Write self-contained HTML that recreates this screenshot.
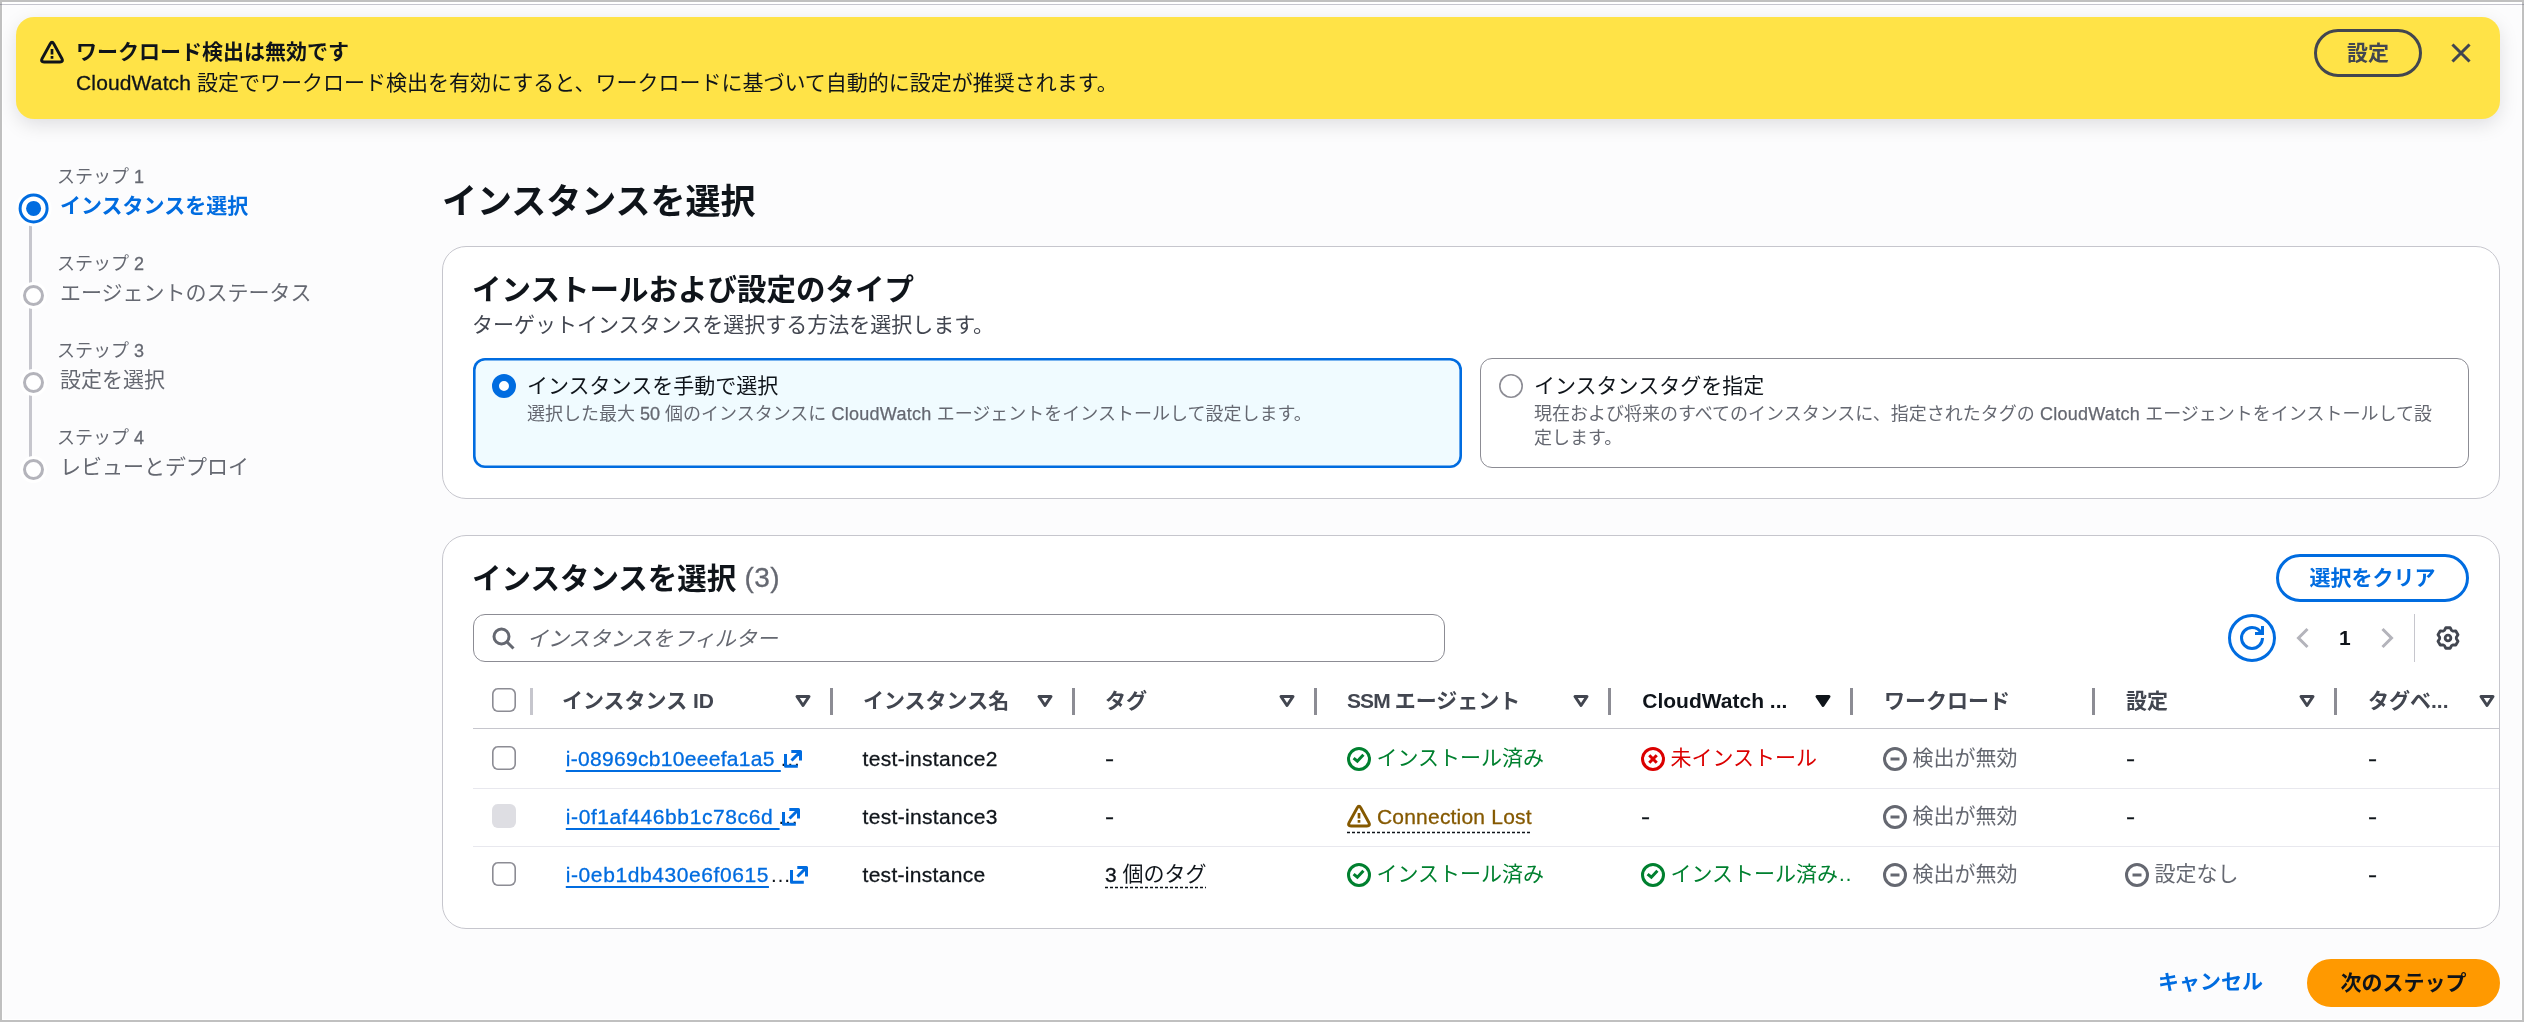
<!DOCTYPE html>
<html lang="ja">
<head>
<meta charset="utf-8">
<title>インスタンスを選択</title>
<style>
*{box-sizing:border-box;margin:0;padding:0}
html,body{width:2524px;height:1022px;overflow:hidden;background:#fcfcfd}
body{position:relative;font-family:"Liberation Sans","Noto Sans CJK JP",sans-serif;font-size:21px;line-height:30px;color:#0f141a;-webkit-font-smoothing:antialiased}
.abs{position:absolute;white-space:nowrap}
.b{font-weight:700}
svg{display:block;position:absolute;overflow:visible}
svg.ic{width:24px;height:24px;fill:none;stroke:currentColor;stroke-width:2;stroke-linecap:butt;stroke-linejoin:miter}
svg.ic.rj,svg.ic .rj{stroke-linejoin:round}
svg.ic.rc,svg.ic .rc{stroke-linecap:round}
.l{letter-spacing:.15px;-webkit-text-stroke:.3px currentColor}
.l2{letter-spacing:.25px;-webkit-text-stroke:.25px currentColor}
.lt{-webkit-text-stroke:.3px currentColor}
#wrap{position:absolute;left:0;top:0;width:2524px;height:1022px;will-change:transform}
/* frame */
#frame{position:absolute;left:0;top:0;width:2524px;height:1022px;border:2px solid #c0c0c0;z-index:50;pointer-events:none}
#frame i{position:absolute;left:0;top:0;right:0;bottom:0;border:2px solid #fff;border-width:2px 1px 1px 1px}
#topline{position:absolute;left:0;top:4px;width:2524px;height:1px;background:rgba(80,80,110,.32);z-index:60}
/* flash */
#flash{position:absolute;left:16px;top:17px;width:2484px;height:102px;border-radius:18px;background:#ffe347;box-shadow:0 6px 20px -1px rgba(0,7,22,.13)}
.btn{position:absolute;height:48px;border-radius:24px;border:3px solid;font-weight:700;text-align:center;line-height:42px;white-space:nowrap}
/* steps */
.sm{font-size:18px;line-height:24px;color:#656871}
.mut{color:#656871}
.sec{color:#424650}
.blue{color:#006ce0}
.vline{position:absolute;left:29px;width:3px;background:#c6c6cd}
.dot{position:absolute;border-radius:50%;box-shadow:0 0 0 3px #fff}
/* containers */
.box{position:absolute;left:442px;width:2058px;border:1px solid #c6c6cd;border-radius:24px;background:#fff;overflow:hidden}
.tile{position:absolute;top:358px;width:989px;height:110px;border-radius:12px}
/* table */
.hd{font-weight:700;color:#424650}
.div{position:absolute;top:688px;width:3px;height:27px;background:#8c8c94}
.cb{position:absolute;left:492px;width:24px;height:24px;box-shadow:inset 0 0 0 1.6px #8c8c94;border-radius:6px;background:#fff}
.rowline{position:absolute;left:473px;width:2026px;height:1px;background:#e8e8ee}
.st{position:absolute;white-space:nowrap;padding-left:29.5px}
.st svg{left:0;top:3px}
.green{color:#00802f}.red{color:#db0000}.warn{color:#855900}
.dash{border-bottom:1.5px dashed currentColor}
a.lnk{color:#006ce0;white-space:pre;text-decoration:underline;text-decoration-thickness:1.5px;text-underline-offset:4.2px}
</style>
</head>
<body>
<div id="wrap">
<div id="topline"></div>

<!-- FLASH -->
<div id="flash"></div>
<svg class="ic rj" style="left:40px;top:40px" viewBox="0 0 16 16"><path d="M6.8 2.59Q8 .4 9.2 2.59L14.6 12.41Q15.8 14.6 13.3 14.6H2.7Q.2 14.6 1.4 12.41Z"/><path d="M8 6v3.7M8 10.7v1.8" stroke-width="1.8"/></svg>
<div class="abs b" style="left:76px;top:37px">ワークロード検出は無効です</div>
<div class="abs" style="left:76px;top:68px"><span class="l">CloudWatch </span>設定でワークロード検出を有効にすると、ワークロードに基づいて自動的に設定が推奨されます。</div>
<div class="btn sec" style="left:2314px;top:29px;width:108px;border-color:#424650">設定</div>
<svg class="ic sec" style="left:2449px;top:41px" viewBox="0 0 16 16"><path d="m2.3 2.3 11.4 11.4M13.7 2.3 2.3 13.7"/></svg>

<!-- STEPS -->
<div class="vline" style="top:222px;height:66px"></div>
<div class="vline" style="top:305px;height:70px"></div>
<div class="vline" style="top:392px;height:70px"></div>
<div class="abs sm" style="left:57px;top:165px">ステップ <span class="lt">1</span></div>
<div class="abs b blue" style="left:60px;top:191px">インスタンスを選択</div>
<svg style="left:13px;top:188px;width:41px;height:41px" viewBox="0 0 41 41"><circle cx="20.6" cy="20.4" r="18" fill="#fff"/><circle cx="20.6" cy="20.4" r="13.5" fill="#fff" stroke="#006ce0" stroke-width="3"/><circle cx="20.6" cy="20.4" r="7.5" fill="#006ce0"/></svg>

<div class="abs sm" style="left:57px;top:252px">ステップ <span class="lt">2</span></div>
<div class="abs mut" style="left:60px;top:278px">エージェントのステータス</div>
<div class="dot" style="left:23px;top:285px;width:21px;height:21px;border:3px solid #b4b4bb;background:#fff"></div>

<div class="abs sm" style="left:57px;top:339px">ステップ <span class="lt">3</span></div>
<div class="abs mut" style="left:60px;top:365px">設定を選択</div>
<div class="dot" style="left:23px;top:372px;width:21px;height:21px;border:3px solid #b4b4bb;background:#fff"></div>

<div class="abs sm" style="left:57px;top:426px">ステップ <span class="lt">4</span></div>
<div class="abs mut" style="left:60px;top:452px">レビューとデプロイ</div>
<div class="dot" style="left:23px;top:459px;width:21px;height:21px;border:3px solid #b4b4bb;background:#fff"></div>

<!-- MAIN -->
<h1 class="abs b" style="left:442px;top:179px;font-size:35px;line-height:45px">インスタンスを選択</h1>

<div class="box" style="top:246px;height:253px"></div>
<h2 class="abs b" style="left:472px;top:271.5px;font-size:29.5px;line-height:36px">インストールおよび設定のタイプ</h2>
<div class="abs sec" style="left:472px;top:310px">ターゲットインスタンスを選択する方法を選択します。</div>

<div class="tile" style="left:473px;box-shadow:inset 0 0 0 2.6px #006ce0;background:#f0fbff"></div>
<div class="dot" style="left:492px;top:374px;width:24px;height:24px;border:7px solid #006ce0;background:#fff;box-shadow:none"></div>
<div class="abs" style="left:527px;top:370.5px">インスタンスを手動で選択</div>
<div class="abs sm" style="left:527px;top:402px">選択した最大 <span class="lt">50</span> 個のインスタンスに<span class="l2"> CloudWatch </span>エージェントをインストールして設定します。</div>

<div class="tile" style="left:1480px;border:1.5px solid #8c8c94;background:#fff"></div>
<div class="dot" style="left:1499px;top:374px;width:24px;height:24px;background:#fff;box-shadow:inset 0 0 0 1.6px #8c8c94"></div>
<div class="abs" style="left:1534px;top:370.5px">インスタンスタグを指定</div>
<div class="abs sm" style="left:1534px;top:402px;white-space:normal;width:910px">現在および将来のすべてのインスタンスに、指定されたタグの<span class="l2"> CloudWatch </span>エージェントをインストールして設定します。</div>

<div class="box" style="top:535px;height:394px"></div>
<h2 class="abs b" style="left:472px;top:560.5px;font-size:29.5px;line-height:36px">インスタンスを選択 <span class="mut lt" style="font-weight:400;font-size:28px;position:relative;top:-1.5px;letter-spacing:.4px">(3)</span></h2>
<div class="btn blue" style="left:2276px;top:554px;width:193px;border-color:#006ce0">選択をクリア</div>

<div class="abs" style="left:473px;top:614px;width:972px;height:48px;border:1.5px solid #8c8c94;border-radius:12px;background:#fff"></div>
<svg class="ic mut" style="left:491px;top:626px" viewBox="0 0 16 16"><circle cx="7" cy="7" r="5"/><path d="m15 15-4.5-4.5"/></svg>
<div class="abs mut" style="left:527px;top:623.5px;font-style:italic">インスタンスをフィルター</div>

<div class="abs" style="left:2228px;top:614px;width:48px;height:48px;border:3px solid #006ce0;border-radius:50%"></div>
<svg class="ic blue" style="left:2240px;top:626px" viewBox="0 0 16 16"><path d="M15 8c0 3.87-3.13 7-7 7s-7-3.13-7-7 3.13-7 7-7c2.79 0 5.2 1.63 6.33 4"/><path d="M10 5h5V0"/></svg>
<svg class="ic" style="left:2291px;top:626px;color:#b4b4bb" viewBox="0 0 16 16"><path d="M11 2 5 8l6 6"/></svg>
<div class="abs b" style="left:2339px;top:623px">1</div>
<svg class="ic" style="left:2375px;top:626px;color:#b4b4bb" viewBox="0 0 16 16"><path d="m5 2 6 6-6 6"/></svg>
<div class="abs" style="left:2414px;top:614px;width:1px;height:48px;background:#c6c6cd"></div>
<svg class="ic sec rj" style="left:2436px;top:626px;stroke-width:1.9" viewBox="0 0 16 16"><circle cx="8" cy="8" r="1.9"/><path d="M9.46 1.15H6.54L5.63 2.92 4.79 3.41 2.8 3.32 1.34 5.84 2.42 7.51V8.49L1.34 10.16 2.8 12.68 4.79 12.59 5.63 13.08 6.54 14.85H9.46L10.37 13.08 11.21 12.59 13.2 12.68 14.66 10.16 13.58 8.49V7.51L14.66 5.84 13.2 3.32 11.21 3.41 10.37 2.92Z"/></svg>

<!-- TABLE HEADER -->
<div class="cb" style="top:688px"></div>
<div class="div" style="left:530px;background:#c6c6cd"></div>
<div class="abs hd" style="left:562px;top:686px">インスタンス ID</div>
<div class="div" style="left:830px"></div>
<div class="abs hd" style="left:863px;top:686px">インスタンス名</div>
<div class="div" style="left:1072px"></div>
<div class="abs hd" style="left:1105px;top:686px">タグ</div>
<div class="div" style="left:1314px"></div>
<div class="abs hd" style="left:1347px;top:686px"><span style="letter-spacing:-.9px">SSM </span>エージェント</div>
<div class="div" style="left:1608px"></div>
<div class="abs hd" style="left:1642.3px;top:686px;color:#0f141a">CloudWatch ...</div>
<div class="div" style="left:1850px"></div>
<div class="abs hd" style="left:1884px;top:686px">ワークロード</div>
<div class="div" style="left:2092px"></div>
<div class="abs hd" style="left:2126px;top:686px">設定</div>
<div class="div" style="left:2334px"></div>
<div class="abs hd" style="left:2368px;top:686px">タグベ...</div>
<div class="abs" style="left:473px;top:728px;width:2026px;height:1px;background:#c6c6cd"></div>

<svg class="ic rj sec" style="left:791.2px;top:689px" viewBox="0 0 16 16"><path d="M4 5h8l-4 6-4-6z"/></svg>
<svg class="ic rj sec" style="left:1033.2px;top:689px" viewBox="0 0 16 16"><path d="M4 5h8l-4 6-4-6z"/></svg>
<svg class="ic rj sec" style="left:1274.7px;top:689px" viewBox="0 0 16 16"><path d="M4 5h8l-4 6-4-6z"/></svg>
<svg class="ic rj sec" style="left:1568.7px;top:689px" viewBox="0 0 16 16"><path d="M4 5h8l-4 6-4-6z"/></svg>
<svg class="ic rj" style="left:1810.7px;top:689px;fill:currentColor" viewBox="0 0 16 16"><path d="M4 5h8l-4 6-4-6z"/></svg>
<svg class="ic rj sec" style="left:2294.7px;top:689px" viewBox="0 0 16 16"><path d="M4 5h8l-4 6-4-6z"/></svg>
<svg class="ic rj sec" style="left:2474.7px;top:689px" viewBox="0 0 16 16"><path d="M4 5h8l-4 6-4-6z"/></svg>
<!-- ROWS -->
<div class="cb" style="top:746px"></div>
<div class="abs" style="left:565.8px;top:744px;"><a class="lnk lt" style="letter-spacing:.30px">i-08969cb10eeefa1a5 </a></div>
<div class="abs" style="left:779.8px;top:744px;z-index:0">…</div>
<svg class="ic rj blue" style="left:782px;top:748px;stroke-width:3" viewBox="0 0 24 24"><path d="M3.5 6.1V18.3H15.8M9.3 3.5H18.5V12.5M18.5 3.5 9.5 12.5"/></svg>
<div class="abs" style="left:862.5px;top:744px;letter-spacing:.33px;-webkit-text-stroke:.3px currentColor">test-instance2</div>
<div class="abs" style="left:1105px;top:744px;"><span class="lt" style="display:inline-block;transform:scaleX(1.3);transform-origin:0 0">-</span></div>
<div class="st green" style="left:1347px;top:744px;"><svg class="ic" viewBox="0 0 16 16"><circle cx="8" cy="8" r="7"/><path d="m4.4 7.4 2.5 2.1 4.05-4.4"/></svg><span style="position:relative;top:-1px">インストール済み</span></div>
<div class="st red" style="left:1641px;top:744px;"><svg class="ic" viewBox="0 0 16 16"><circle cx="8" cy="8" r="7"/><path d="m10.5 5.5-5 5M5.5 5.5l5 5"/></svg><span style="position:relative;top:-1px">未インストール</span></div>
<div class="st mut" style="left:1883px;top:744px;"><svg class="ic" viewBox="0 0 16 16"><circle cx="8" cy="8" r="7"/><path d="M11 8H5"/></svg><span style="position:relative;top:-1px">検出が無効</span></div>
<div class="abs" style="left:2126px;top:744px;"><span class="lt" style="display:inline-block;transform:scaleX(1.3);transform-origin:0 0">-</span></div>
<div class="abs" style="left:2368px;top:744px;"><span class="lt" style="display:inline-block;transform:scaleX(1.3);transform-origin:0 0">-</span></div>
<div class="cb" style="top:804px;box-shadow:none;background:#dedee3"></div>
<div class="abs" style="left:565.8px;top:802px;"><a class="lnk lt" style="letter-spacing:.59px">i-0f1af446bb1c78c6d </a></div>
<div class="abs" style="left:777.6px;top:802px;">…</div>
<svg class="ic rj blue" style="left:779.8px;top:806px;stroke-width:3" viewBox="0 0 24 24"><path d="M3.5 6.1V18.3H15.8M9.3 3.5H18.5V12.5M18.5 3.5 9.5 12.5"/></svg>
<div class="abs" style="left:862.5px;top:802px;letter-spacing:.33px;-webkit-text-stroke:.3px currentColor">test-instance3</div>
<div class="abs" style="left:1105px;top:802px;"><span class="lt" style="display:inline-block;transform:scaleX(1.3);transform-origin:0 0">-</span></div>
<div class="st warn" style="left:1347px;top:802px;padding-left:30px"><svg style="top:1.75px" class="ic rj" viewBox="0 0 16 16"><path d="M6.8 2.59Q8 .4 9.2 2.59L14.6 12.41Q15.8 14.6 13.3 14.6H2.7Q.2 14.6 1.4 12.41Z"/><path d="M8 6v3.7M8 10.7v1.8" stroke-width="1.8"/></svg><span class="lt" style="letter-spacing:.2px">Connection Lost</span></div>
<svg style="left:1347px;top:831px;width:185px;height:3px" viewBox="0 0 185 3"><line x1="0" y1="1.5" x2="185" y2="1.5" stroke="#0f141a" stroke-width="1.3" stroke-dasharray="3 2"/></svg>
<div class="abs" style="left:1641px;top:802px;"><span class="lt" style="display:inline-block;transform:scaleX(1.3);transform-origin:0 0">-</span></div>
<div class="st mut" style="left:1883px;top:802px;"><svg class="ic" viewBox="0 0 16 16"><circle cx="8" cy="8" r="7"/><path d="M11 8H5"/></svg><span style="position:relative;top:-1px">検出が無効</span></div>
<div class="abs" style="left:2126px;top:802px;"><span class="lt" style="display:inline-block;transform:scaleX(1.3);transform-origin:0 0">-</span></div>
<div class="abs" style="left:2368px;top:802px;"><span class="lt" style="display:inline-block;transform:scaleX(1.3);transform-origin:0 0">-</span></div>
<div class="cb" style="top:862px"></div>
<div class="abs" style="left:565.8px;top:860px;"><a class="lnk lt" style="letter-spacing:.58px">i-0eb1db430e6f0615</a><span style="letter-spacing:.5px;margin-left:1px">…</span></div>
<svg class="ic rj blue" style="left:788px;top:864px;stroke-width:3" viewBox="0 0 24 24"><path d="M3.5 6.1V18.3H15.8M9.3 3.5H18.5V12.5M18.5 3.5 9.5 12.5"/></svg>
<div class="abs" style="left:862.5px;top:860px;letter-spacing:.30px;-webkit-text-stroke:.3px currentColor">test-instance</div>
<div class="abs" style="left:1105px;top:860px;"><span class="lt">3</span> <span style="position:relative;top:-1px">個のタグ</span></div>
<svg style="left:1105px;top:886.2px;width:101px;height:3px" viewBox="0 0 101 3"><line x1="0" y1="1.5" x2="101" y2="1.5" stroke="#0f141a" stroke-width="1.3" stroke-dasharray="3 2"/></svg>
<div class="st green" style="left:1347px;top:860px;"><svg class="ic" viewBox="0 0 16 16"><circle cx="8" cy="8" r="7"/><path d="m4.4 7.4 2.5 2.1 4.05-4.4"/></svg><span style="position:relative;top:-1px">インストール済み</span></div>
<div class="st green" style="left:1641px;top:860px;width:210px;overflow:hidden"><svg class="ic" viewBox="0 0 16 16"><circle cx="8" cy="8" r="7"/><path d="m4.4 7.4 2.5 2.1 4.05-4.4"/></svg><span style="position:relative;top:-1px">インストール済み…</span></div>
<div class="st mut" style="left:1883px;top:860px;"><svg class="ic" viewBox="0 0 16 16"><circle cx="8" cy="8" r="7"/><path d="M11 8H5"/></svg><span style="position:relative;top:-1px">検出が無効</span></div>
<div class="st mut" style="left:2125px;top:860px;"><svg class="ic" viewBox="0 0 16 16"><circle cx="8" cy="8" r="7"/><path d="M11 8H5"/></svg><span style="position:relative;top:-1px">設定なし</span></div>
<div class="abs" style="left:2368px;top:860px;"><span class="lt" style="display:inline-block;transform:scaleX(1.3);transform-origin:0 0">-</span></div>
<div class="rowline" style="top:788px"></div>
<div class="rowline" style="top:846px"></div>

<!-- FOOTER -->
<div class="abs b blue" style="left:2158px;top:967px">キャンセル</div>
<div class="btn" style="left:2307px;top:959px;width:193px;border-color:#ff9900;background:#ff9900;color:#0f141a">次のステップ</div>

<div id="frame"><i></i></div>
</div>
</body>
</html>
